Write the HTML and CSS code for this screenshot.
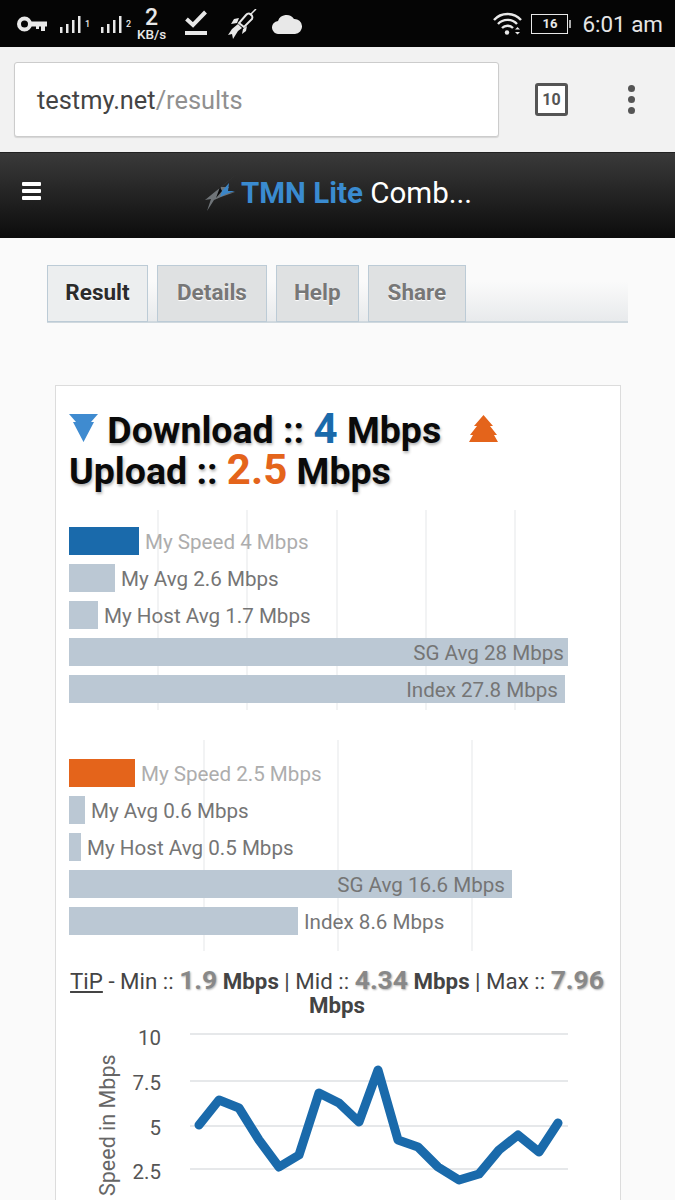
FILE: index.html
```html
<!DOCTYPE html>
<html lang="en">
<head>
  <meta charset="UTF-8" />
  <meta name="viewport" content="width=device-width, initial-scale=1.0"/>
  <title>TMN Lite Combined Results</title>
  <link rel="stylesheet" href="styles.css">
</head>
<body>

  <div class="status-bar">
    <div class="status-left">
      <svg class="ic-key" width="30" height="16" viewBox="0 0 30 16"><circle cx="7.500" cy="8" r="5.500" fill="none" stroke="#e8e8e8" stroke-width="4"/><path d="M13 5.500h17v5h-2v4.500h-4v-4.500h-2v2.500h-3v-2.500h-6z" fill="#e8e8e8"/></svg>
      <svg class="ic-sig" width="22" height="18" viewBox="0 0 22 18"><g fill="#e8e8e8"><rect x="0" y="11" width="2.500" height="6"/><rect x="6" y="8" width="2.500" height="9"/><rect x="12" y="4" width="2.500" height="13"/><rect x="18" y="0" width="2.500" height="17"/></g></svg>
      <span class="sim sim-one">1</span>
      <svg class="ic-sig" width="22" height="18" viewBox="0 0 22 18"><g fill="#e8e8e8"><rect x="0" y="11" width="2.500" height="6"/><rect x="6" y="8" width="2.500" height="9"/><rect x="12" y="4" width="2.500" height="13"/><rect x="18" y="0" width="2.500" height="17"/></g></svg>
      <span class="sim">2</span>
      <div class="net-speed"><span class="net-num">2</span><span class="net-unit">KB/s</span></div>
      <svg class="ic-check" width="22" height="26" viewBox="0 0 22 26"><path d="M1.500 9l6.500 6L20.500 2" fill="none" stroke="#e8e8e8" stroke-width="4"/><rect y="21" width="22" height="4" fill="#e8e8e8"/></svg>
      <svg class="ic-rocket" width="30" height="30" viewBox="0 0 30 30"><path d="M29 0l-6 6" stroke="#e8e8e8" stroke-width="1.500"/><path d="M23 5c2 1 3 3 2 5l-8 8-5-4 7-8c1-1 3-2 4-1z" fill="none" stroke="#e8e8e8" stroke-width="2"/><path d="M12 9l-5 1-3 5 6-1zM20 17l-1 5-4 3 1-5zM11 15l4 4-4 3-5 8-1-5-4 1 4-6z" fill="#e8e8e8"/></svg>
      <svg class="ic-cloud" width="30" height="21" viewBox="0 0 30 21"><path d="M7 21a6.500 6.500 0 0 1-1-13 9 9 0 0 1 16-2 7.500 7.500 0 0 1 1 15z" fill="#e8e8e8"/></svg>
    </div>
    <div class="status-right">
      <svg class="ic-wifi" width="29" height="23" viewBox="0 0 29 23"><g fill="none" stroke="#e8e8e8" stroke-width="2.400"><path d="M1 8c7-8 20-8 27 0"/><path d="M5 12c5-5.500 14-5.500 19 0"/><path d="M9 16c3-3 8-3 11 0"/></g><circle cx="14" cy="20.500" r="2.200" fill="#e8e8e8"/><path d="M22 17.500l2.500-2.500 2.500 2.500zM22 20l2.500 2.500 2.500-2.500z" fill="#e8e8e8"/></svg>
      <div class="battery"><span>16</span></div>
      <span class="clock">6:01 am</span>
    </div>
  </div>

  <div class="toolbar">
    <div class="url-box"><span class="host">testmy.net</span><span class="path">/results</span></div>
    <div class="tab-count">10</div>
    <div class="menu-dots"><i></i><i></i><i></i></div>
  </div>

  <div class="site-header">
    <div class="burger"><i></i><i></i><i></i></div>
    <div class="site-title">
      <svg class="logo" width="32" height="37" viewBox="0 0 32 37"><path d="M32 0L16 13l8 0-4 6 10-1-14 5-7 3-7 11 4-12-6 1 11-9 4-3z" fill="#6f7478"/><path d="M24 9l-7 8-2 6 6-3 9-3-7 0z" fill="#3b86c8"/><path d="M15 13l-4 11 6-7z" fill="#0b0b0b"/></svg>
      <span class="title-text"><span class="brand">TMN Lite</span> <span class="title-rest">Comb...</span></span>
    </div>
  </div>

  <div class="tabs">
    <div class="tab active">Result</div>
    <div class="tab">Details</div>
    <div class="tab tab-narrow">Help</div>
    <div class="tab">Share</div>
  </div>

  <div class="card">
    <h2 class="speeds">
      <svg class="arrow arrow-down" width="29" height="28" viewBox="0 0 29 28"><path d="M0 0h29l-7 8h3L14.500 28 4 8h3z" fill="#3f8bd0"/></svg>
      Download :: <span class="dl">4</span> Mbps
      <svg class="arrow arrow-up" width="29" height="27" viewBox="0 0 29 27"><path d="M14.500 0L24 11h-3l7 9h-3l4 7H0l4-7H1l7-9H5z" fill="#e4641b"/></svg>
      <br>Upload :: <span class="ul">2.5</span> Mbps
    </h2>

    <div class="chart chart-dl">
      <div class="row"><div class="bar bar-dl" style="width:70px"></div><span class="label faded">My Speed 4 Mbps</span></div>
      <div class="row"><div class="bar" style="width:46px"></div><span class="label">My Avg 2.6 Mbps</span></div>
      <div class="row"><div class="bar" style="width:29px"></div><span class="label">My Host Avg 1.7 Mbps</span></div>
      <div class="row"><div class="bar" style="width:499px"><span class="label">SG Avg 28 Mbps</span></div></div>
      <div class="row"><div class="bar" style="width:496px"><span class="label inset">Index 27.8 Mbps</span></div></div>
    </div>

    <div class="chart chart-ul">
      <div class="row"><div class="bar bar-ul" style="width:66px"></div><span class="label faded">My Speed 2.5 Mbps</span></div>
      <div class="row"><div class="bar" style="width:16px"></div><span class="label">My Avg 0.6 Mbps</span></div>
      <div class="row"><div class="bar" style="width:12px"></div><span class="label">My Host Avg 0.5 Mbps</span></div>
      <div class="row"><div class="bar" style="width:443px"><span class="label inset">SG Avg 16.6 Mbps</span></div></div>
      <div class="row"><div class="bar" style="width:229px"></div><span class="label">Index 8.6 Mbps</span></div>
    </div>

    <p class="tip"><u>TiP</u> - Min :: <span class="num">1.9</span> <b>Mbps</b> | Mid :: <span class="num">4.34</span> <b>Mbps</b> | Max :: <span class="num">7.96</span> <b>Mbps</b></p>

    <svg class="line-chart" width="564" height="190" viewBox="0 0 564 190">
      <g stroke="#e6e8ea" stroke-width="2">
        <path d="M135 17H513"/>
        <path d="M135 64H513"/>
        <path d="M135 109H513"/>
        <path d="M135 152H513"/>
      </g>
      <g class="axis-nums" text-anchor="end">
        <text x="106" y="28">10</text>
        <text x="106" y="73">7.5</text>
        <text x="106" y="118">5</text>
        <text x="106" y="162">2.5</text>
      </g>
      <text class="axis-title" transform="translate(60 179) rotate(-90)">Speed in Mbps</text>
      <polyline fill="none" stroke="#1a6aab" stroke-width="9" stroke-linejoin="round" stroke-linecap="round" points="144,108 164,83 184,91 204,123 224,150 244,138 264,76 284,86 304,105 323,53 343,123 363,130 383,150 404,163 424,157 444,133 463,118 484,135 503,106"/>
    </svg>
  </div>

</body>
</html>
```

FILE: styles.css
```css
html, body {
  height: 1200px;
  overflow: hidden;
}

body {
  font-family: Roboto, 'Liberation Sans', sans-serif;
  background: #fafafa;
  margin: 0;
  padding: 0;
  color: #555;
}

.status-bar {
  display: flex;
  justify-content: space-between;
  align-items: center;
  height: 47px;
  padding: 0 12px 0 17px;
  background: #050505;
  color: #e8e8e8;
}

.status-left, .status-right {
  display: flex;
  align-items: center;
}

.ic-key { margin-right: 13px; margin-top: 1px; }
.ic-sig { margin-top: 2px; }

.sim {
  font-size: 9px;
  font-weight: 500;
  align-self: flex-end;
  margin: 0 0 12px 3px;
  width: 16px;
}

.net-speed {
  display: flex;
  flex-direction: column;
  align-items: center;
  margin-left: -5px;
  line-height: 1;
}

.net-num {
  font-size: 23px;
  font-weight: 500;
  line-height: 21px;
}

.net-unit {
  font-size: 13.500px;
  font-weight: 500;
  line-height: 13px;
}

.ic-check { margin-left: 19px; margin-top: -1px; }
.ic-rocket { margin-left: 20px; margin-top: 0; }
.ic-cloud { margin-left: 15px; }

.ic-wifi { margin-right: 9px; }

.battery {
  width: 35px;
  height: 18px;
  border: 1px solid #e8e8e8;
  text-align: center;
  font-size: 13px;
  font-weight: 700;
  line-height: 18px;
  margin-right: 14px;
  position: relative;
}

.battery::after {
  content: "";
  position: absolute;
  right: -4px;
  top: 5px;
  width: 2px;
  height: 8px;
  background: #aaa;
}

.clock {
  font-size: 22.400px;
  color: #e6e6e6;
}

.toolbar {
  display: flex;
  align-items: center;
  height: 105px;
  padding-left: 14px;
  box-sizing: border-box;
  background: #f2f2f2;
}

.url-box {
  width: 485px;
  height: 75px;
  box-sizing: border-box;
  padding-left: 22px;
  line-height: 75px;
  font-size: 25.400px;
  background: #fff;
  border: 1px solid #ccc;
  border-radius: 3px;
  box-shadow: 0 1px 1px rgba(0,0,0,0.12);
}

.host { color: #444; }
.path { color: #909090; }

.tab-count {
  width: 33px;
  height: 33px;
  box-sizing: border-box;
  margin-left: 36px;
  border: 3px solid #555;
  border-radius: 3px;
  background: #fff;
  color: #555;
  font-size: 16px;
  font-weight: 700;
  line-height: 27px;
  text-align: center;
}

.menu-dots {
  display: flex;
  flex-direction: column;
  gap: 4px;
  margin-left: 60px;
}

.menu-dots i {
  width: 7px;
  height: 7px;
  border-radius: 50%;
  background: #555;
}

.site-header {
  display: flex;
  align-items: center;
  height: 86px;
  padding-left: 205px;
  position: relative;
  background: linear-gradient(#3a3a3a, #0c0c0c);
  border-top: 1px solid #222;
  box-sizing: border-box;
}

.burger {
  position: absolute;
  left: 22px;
  top: 29px;
  display: flex;
  flex-direction: column;
  gap: 3px;
}

.burger i {
  width: 19px;
  height: 4px;
  border-radius: 1px;
  background: #fff;
}

.site-title {
  display: flex;
  align-items: center;
  font-size: 29.500px;
  margin-top: -6px;
}

.logo { margin-right: 4px; }

.brand {
  color: #3a8bd0;
  font-weight: 700;
}

.title-rest { color: #fff; }

.tabs {
  display: flex;
  gap: 9px;
  width: 581px;
  height: 58px;
  box-sizing: border-box;
  margin: 27px 0 0 47px;
  border-bottom: 2px solid #cfd8de;
  background: linear-gradient(to bottom, #fafafa 30%, #e8eaec);
}

.tab {
  display: flex;
  align-items: center;
  justify-content: center;
  height: 57px;
  padding: 0 19px 3px;
  box-sizing: border-box;
  border: 1px solid #bccbd6;
  background: #dfe1e2;
  color: #777;
  font-size: 22.500px;
  font-weight: 700;
  text-shadow: 0 1px 1px #fff;
}

.tab-narrow { padding: 0 17px 3px; }

.tab.active {
  background: #eceeef;
  color: #2b2b2b;
  width: 101px;
  padding: 0 0 3px;
}

.card {
  width: 566px;
  height: 900px;
  box-sizing: border-box;
  margin: 62px 0 0 55px;
  padding: 0 0 0 13px;
  background: #fff;
  border: 1px solid #dcdcdc;
}

.speeds {
  margin: 24px 0 0;
  font-size: 37.500px;
  line-height: 41px;
  font-weight: 700;
  color: #0a0a0a;
  text-shadow: 1px 2px 3px rgba(0,0,0,0.3);
}

.arrow-down { vertical-align: 1px; }
.arrow-up { margin-left: 18px; vertical-align: 1px; }

.dl, .ul {
  font-size: 42px;
  line-height: 0;
  font-weight: 700;
  text-shadow: none;
}

.dl { color: #1a6aab; }
.ul { color: #e4641b; }

.chart {
  display: flex;
  flex-direction: column;
  background-repeat: no-repeat;
}

.chart-dl {
  margin-top: 18px;
  padding: 17px 0 7px;
  width: 520px;
  background-image:
    linear-gradient(#f2f3f4, #f2f3f4), linear-gradient(#f2f3f4, #f2f3f4),
    linear-gradient(#f2f3f4, #f2f3f4), linear-gradient(#f2f3f4, #f2f3f4),
    linear-gradient(#f2f3f4, #f2f3f4);
  background-size: 2px 100%;
  background-position: 88px 0, 177px 0, 267px 0, 356px 0, 445px 0;
}

.chart-ul {
  margin-top: 30px;
  padding: 19px 0 16px;
  width: 520px;
  background-image:
    linear-gradient(#f2f3f4, #f2f3f4), linear-gradient(#f2f3f4, #f2f3f4),
    linear-gradient(#f2f3f4, #f2f3f4);
  background-size: 2px 100%;
  background-position: 134px 0, 268px 0, 402px 0;
}

.row {
  display: flex;
  align-items: center;
  height: 28px;
  margin-bottom: 9px;
}

.row:last-child { margin-bottom: 0; }

.bar {
  display: flex;
  align-items: center;
  justify-content: flex-end;
  height: 28px;
  background: #bbc8d4;
}

.bar-dl { background: #1a6aab; }
.bar-ul { background: #e4641b; }

.label {
  padding: 2px 6px 0;
  font-size: 20.600px;
  color: #757575;
  white-space: nowrap;
}

.bar .label { padding-right: 4px; }
.bar .label.inset { padding-right: 7px; }

.label.faded { color: #adadad; }

.tip {
  margin: 18px 0 0;
  width: 536px;
  font-size: 22.300px;
  line-height: 24px;
  text-align: center;
  color: #444;
}

.tip b { font-weight: 700; }

.num {
  font-size: 26.500px;
  line-height: 0;
  font-weight: 700;
  color: #888;
  text-shadow: 1px 1px 2px rgba(0,0,0,0.3);
}

.line-chart {
  display: block;
  margin-left: -14px;
}

.axis-nums text {
  font-size: 20.500px;
  fill: #555;
}

.axis-title {
  font-size: 21.500px;
  fill: #666;
}
```
